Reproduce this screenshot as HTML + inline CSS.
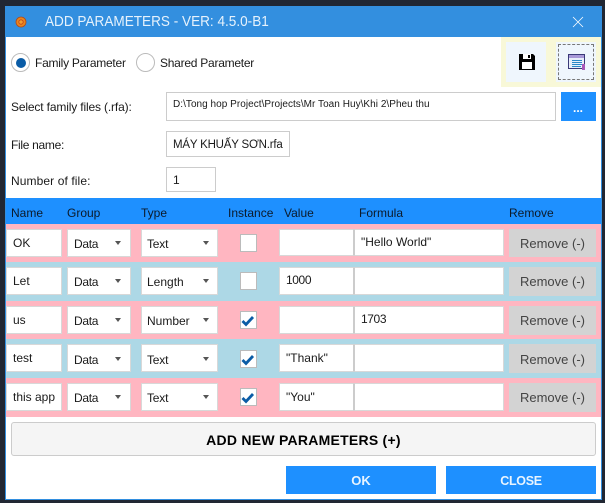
<!DOCTYPE html>
<html><head><meta charset="utf-8">
<style>
html,body{margin:0;padding:0;width:605px;height:503px;overflow:hidden;background:#212733}
body{position:relative;font-family:"Liberation Sans","Noto Sans CJK SC",sans-serif;font-size:12px;color:#111}
.a{position:absolute;box-sizing:border-box}
.t{position:absolute;white-space:nowrap;line-height:16px;color:#1a1a1a}
.in{position:absolute;box-sizing:border-box;background:#fff;border:1px solid #d8d8d8}
.arr{position:absolute;width:0;height:0;border-left:3.5px solid transparent;border-right:3.5px solid transparent;border-top:4px solid #555}
.rm{position:absolute;left:509px;width:87px;background:#d3d3d3;color:#444;text-align:center;font-size:13px}
.h{top:205px;color:#0c1a2a}
.chk{position:absolute;left:241px}
.cb{left:239.5px;width:17.5px;height:18px;border-color:#bbb}
</style></head><body>
<div class="a" style="left:5px;top:6px;width:597px;height:494px;background:#fff;border:1px solid #338fdf"></div>
<div class="a" style="left:5px;top:6px;width:597px;height:31px;background:#338fdf"></div>
<svg class="a" style="left:15px;top:16px" width="12" height="12" viewBox="0 0 12 12"><circle cx="6" cy="6" r="5" fill="#e8861c" stroke="#b0481a" stroke-width=".8"/><circle cx="6" cy="6" r="2.2" fill="#f0a030" stroke="#c8401a" stroke-width=".8"/></svg>
<div class="t" style="left:44.5px;top:13px;color:#e6f2fc;font-size:15px;line-height:18px;transform:scaleX(.905);transform-origin:0 0">ADD PARAMETERS - VER: 4.5.0-B1</div>
<svg class="a" style="left:572px;top:16px" width="12" height="12" viewBox="0 0 12 12"><path d="M1 1L11 11M11 1L1 11" stroke="#fff" stroke-width=".8" fill="none"/></svg>

<!-- radios -->
<div class="a" style="left:11px;top:53px;width:19px;height:19px;border-radius:50%;border:1px solid #bbb;background:#fff"></div>
<div class="a" style="left:15.5px;top:57.5px;width:10px;height:10px;border-radius:50%;background:#0a5ca6"></div>
<div class="t" style="left:35px;top:55px;letter-spacing:-.25px">Family Parameter</div>
<div class="a" style="left:136px;top:53px;width:19px;height:19px;border-radius:50%;border:1px solid #bbb;background:#fff"></div>
<div class="t" style="left:160px;top:55px;letter-spacing:-.25px">Shared Parameter</div>

<!-- toolbar -->
<div class="a" style="left:501px;top:37px;width:100px;height:50px;background:#f8f8d8"></div>
<div class="a" style="left:506px;top:42px;width:40px;height:40px;background:#eff6fd"></div>
<div class="a" style="left:556px;top:42px;width:40px;height:40px;background:#eff6fd"></div>
<div class="a" style="left:558px;top:44px;width:36px;height:36px;border:1px dashed #777"></div>
<svg class="a" style="left:519px;top:54px" width="16" height="16" viewBox="0 0 16 16"><path d="M0 0H14L16 2V16H0Z" fill="#000"/><rect x="4" y="0" width="8" height="5" fill="#fff"/><rect x="9" y="1" width="2" height="3" fill="#000"/><rect x="3" y="8" width="10" height="7" fill="#fff"/></svg>
<svg class="a" style="left:568px;top:54px" width="18" height="17" viewBox="0 0 18 17"><rect x=".5" y=".5" width="16" height="14" fill="#e8eefa" stroke="#3a3a78"/><rect x="1" y="1" width="15" height="3" fill="#a898d8"/><path d="M4 6.5H14M4 8.5H14M4 10.5H14M4 12.5H13" stroke="#2a88c8" stroke-width="1"/><rect x="14" y="10" width="3" height="6" fill="#a858b8"/></svg>

<!-- file rows -->
<div class="t" style="left:11px;top:99px;letter-spacing:-.15px">Select family files (.rfa):</div>
<div class="in" style="left:166px;top:92px;width:390px;height:29px;border-color:#ccc"></div>
<div class="t" style="left:173px;top:97px;font-size:10px;letter-spacing:.04px">D:\Tong hop Project\Projects\Mr Toan Huy\Khi 2\Pheu thu</div>
<div class="a" style="left:561px;top:92px;width:35px;height:29px;background:#1e90ff"></div>
<div class="t" style="left:573px;top:101px;color:#fff;font-size:12px;line-height:14px;font-weight:bold">...</div>
<div class="t" style="left:11px;top:137px;letter-spacing:-.3px">File name:</div>
<div class="in" style="left:166px;top:131px;width:124px;height:26px;border-color:#ccc"></div>
<div class="t" style="left:173px;top:137px;font-size:11.5px;letter-spacing:-.2px">MÁY KHUẤY SƠN.rfa</div>
<div class="t" style="left:11px;top:173px;letter-spacing:.1px">Number of file:</div>
<div class="in" style="left:166px;top:167px;width:50px;height:25px;border-color:#ccc"></div>
<div class="t" style="left:173px;top:172px">1</div>

<!-- header -->
<div class="a" style="left:6px;top:198px;width:595px;height:26px;background:#1e90ff"></div>
<div class="t h" style="left:11px">Name</div>
<div class="t h" style="left:67px">Group</div>
<div class="t h" style="left:141px">Type</div>
<div class="t h" style="left:228px">Instance</div>
<div class="t h" style="left:284px">Value</div>
<div class="t h" style="left:359px">Formula</div>
<div class="t h" style="left:509px">Remove</div>

<!-- row backgrounds -->
<div class="a" style="left:6px;top:224px;width:595px;height:38px;background:#ffb6c1"></div>
<div class="a" style="left:6px;top:262px;width:595px;height:39px;background:#add8e6"></div>
<div class="a" style="left:6px;top:301px;width:595px;height:38px;background:#ffb6c1"></div>
<div class="a" style="left:6px;top:339px;width:595px;height:39px;background:#add8e6"></div>
<div class="a" style="left:6px;top:378px;width:595px;height:39px;background:#ffb6c1"></div>

<!-- row 1 -->
<div class="in" style="left:6px;top:229px;width:56px;height:28px"></div><div class="t" style="left:13px;top:235px">OK</div>
<div class="in" style="left:67px;top:229px;width:64px;height:28px"></div><div class="t" style="left:74px;top:236px;letter-spacing:-.3px">Data</div><div class="arr" style="left:115px;top:241px"></div>
<div class="in" style="left:141px;top:229px;width:77px;height:28px"></div><div class="t" style="left:147px;top:236px;letter-spacing:-.2px">Text</div><div class="arr" style="left:203px;top:241px"></div>
<div class="in cb" style="top:234px"></div>
<div class="in" style="left:279px;top:229px;width:75px;height:27px;border-right-color:#ccc"></div>
<div class="in" style="left:354px;top:229px;width:150px;height:27px;border-left-color:#ccc"></div><div class="t" style="left:361px;top:234px">"Hello World"</div>
<div class="rm" style="top:229px;height:28px;line-height:30px">Remove (-)</div>

<!-- row 2 -->
<div class="in" style="left:6px;top:267px;width:56px;height:28px"></div><div class="t" style="left:13px;top:273px">Let</div>
<div class="in" style="left:67px;top:267px;width:64px;height:28px"></div><div class="t" style="left:74px;top:274px;letter-spacing:-.3px">Data</div><div class="arr" style="left:115px;top:279px"></div>
<div class="in" style="left:141px;top:267px;width:77px;height:28px"></div><div class="t" style="left:147px;top:274px">Length</div><div class="arr" style="left:203px;top:279px"></div>
<div class="in cb" style="top:272px"></div>
<div class="in" style="left:279px;top:267px;width:75px;height:28px;border-right-color:#ccc"></div><div class="t" style="left:286px;top:272px;letter-spacing:-.4px">1000</div>
<div class="in" style="left:354px;top:267px;width:150px;height:28px;border-left-color:#ccc"></div>
<div class="rm" style="top:267px;height:29px;line-height:30px">Remove (-)</div>

<!-- row 3 -->
<div class="in" style="left:6px;top:306px;width:56px;height:28px"></div><div class="t" style="left:13px;top:312px">us</div>
<div class="in" style="left:67px;top:306px;width:64px;height:28px"></div><div class="t" style="left:74px;top:313px;letter-spacing:-.3px">Data</div><div class="arr" style="left:115px;top:318px"></div>
<div class="in" style="left:141px;top:306px;width:77px;height:28px"></div><div class="t" style="left:147px;top:313px">Number</div><div class="arr" style="left:203px;top:318px"></div>
<div class="in cb" style="top:311px"></div>
<svg class="chk a" style="top:314px" width="14" height="14" viewBox="0 0 14 14"><path d="M1.5 7L5 10.5L12 3" stroke="#0a5ca6" stroke-width="2.8" fill="none"/></svg>
<div class="in" style="left:279px;top:306px;width:75px;height:28px;border-right-color:#ccc"></div>
<div class="in" style="left:354px;top:306px;width:150px;height:28px;border-left-color:#ccc"></div><div class="t" style="left:361px;top:311px;letter-spacing:-.4px">1703</div>
<div class="rm" style="top:306px;height:29px;line-height:30px">Remove (-)</div>

<!-- row 4 -->
<div class="in" style="left:6px;top:344px;width:56px;height:28px"></div><div class="t" style="left:13px;top:350px">test</div>
<div class="in" style="left:67px;top:344px;width:64px;height:28px"></div><div class="t" style="left:74px;top:352px;letter-spacing:-.3px">Data</div><div class="arr" style="left:115px;top:357px"></div>
<div class="in" style="left:141px;top:344px;width:77px;height:28px"></div><div class="t" style="left:147px;top:352px;letter-spacing:-.2px">Text</div><div class="arr" style="left:203px;top:357px"></div>
<div class="in cb" style="top:350px"></div>
<svg class="chk a" style="top:353px" width="14" height="14" viewBox="0 0 14 14"><path d="M1.5 7L5 10.5L12 3" stroke="#0a5ca6" stroke-width="2.8" fill="none"/></svg>
<div class="in" style="left:279px;top:344px;width:75px;height:28px;border-right-color:#ccc"></div><div class="t" style="left:286px;top:350px">"Thank"</div>
<div class="in" style="left:354px;top:344px;width:150px;height:28px;border-left-color:#ccc"></div>
<div class="rm" style="top:344px;height:29px;line-height:31px">Remove (-)</div>

<!-- row 5 -->
<div class="in" style="left:6px;top:383px;width:56px;height:28px"></div><div class="t" style="left:13px;top:389px">this app</div>
<div class="in" style="left:67px;top:383px;width:64px;height:28px"></div><div class="t" style="left:74px;top:390px;letter-spacing:-.3px">Data</div><div class="arr" style="left:115px;top:395px"></div>
<div class="in" style="left:141px;top:383px;width:77px;height:28px"></div><div class="t" style="left:147px;top:390px;letter-spacing:-.2px">Text</div><div class="arr" style="left:203px;top:395px"></div>
<div class="in cb" style="top:388px"></div>
<svg class="chk a" style="top:391px" width="14" height="14" viewBox="0 0 14 14"><path d="M1.5 7L5 10.5L12 3" stroke="#0a5ca6" stroke-width="2.8" fill="none"/></svg>
<div class="in" style="left:279px;top:383px;width:75px;height:28px;border-right-color:#ccc"></div><div class="t" style="left:286px;top:389px">"You"</div>
<div class="in" style="left:354px;top:383px;width:150px;height:28px;border-left-color:#ccc"></div>
<div class="rm" style="top:383px;height:29px;line-height:30px">Remove (-)</div>

<!-- bottom -->
<div class="a" style="left:11px;top:422px;width:585px;height:34px;background:#f5f5f5;border:1px solid #ccc;border-radius:3px;text-align:center;font-weight:bold;font-size:14px;line-height:34px;color:#000;letter-spacing:.25px">ADD NEW PARAMETERS (+)</div>
<div class="a" style="left:286px;top:466px;width:150px;height:28px;background:#1e90ff;color:#e8f4ff;text-align:center;font-weight:bold;font-size:13px;line-height:30px">OK</div>
<div class="a" style="left:446px;top:466px;width:150px;height:28px;background:#1e90ff;color:#e8f4ff;text-align:center;font-weight:bold;font-size:12.5px;line-height:30px;letter-spacing:-.3px">CLOSE</div>
</body></html>
